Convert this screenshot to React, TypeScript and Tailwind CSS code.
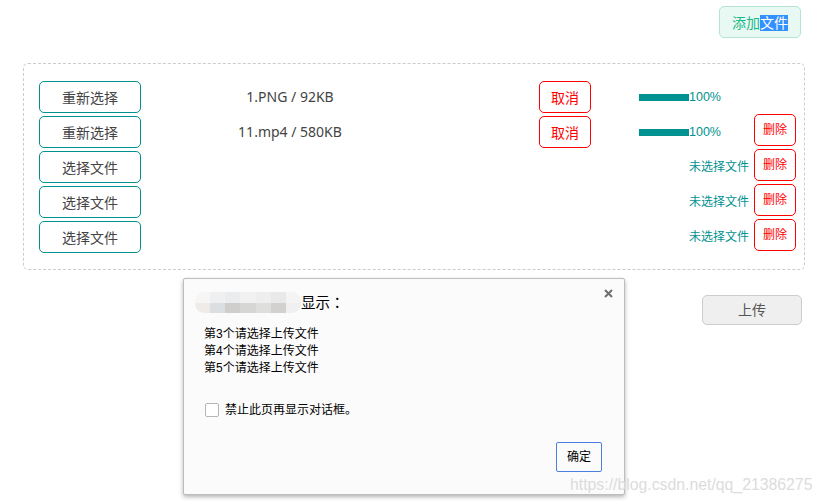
const fontCls = "font-['Liberation_Sans','Noto_Sans_CJK_SC',sans-serif]"

const rows = [
  { label: '重新选择', file: '1.PNG / 92KB', done: true, del: false },
  { label: '重新选择', file: '11.mp4 / 580KB', done: true, del: true },
  { label: '选择文件', file: '', done: false, del: true },
  { label: '选择文件', file: '', done: false, del: true },
  { label: '选择文件', file: '', done: false, del: true },
]

// pixelated blur over the hostname in the dialog title
const blurTop = ['#f7f6f5', '#eef0f1', '#ebecee', '#f1f1f1', '#eeeeee', '#e9e9e9', '#f4f4f4']
const blurBottom = ['#eeebe8', '#dcdfe2', '#cfcecc', '#d6d6d5', '#dededd', '#d2d1cf', '#f0f0f0']

function FileRow({ label, file, done, del }: (typeof rows)[number]) {
  return (
    <div className="flex h-8 items-start">
      <button className="h-8 w-[102px] shrink-0 rounded-[5px] border border-[#009191] bg-white pt-[1px] text-sm text-[#444]">
        {label}
      </button>
      <div className="w-[298px] shrink-0 pt-[6px] text-center font-['Noto_Sans','Noto_Sans_CJK_SC',sans-serif] text-sm leading-5 text-[#444]">
        {file}
      </div>
      <div className="ml-[100px] w-[52px] shrink-0">
        {done && (
          <button className="h-8 w-[52px] rounded-[5px] border border-[#ff0000] bg-white pt-[1px] text-sm text-[#ff0000]">
            取消
          </button>
        )}
      </div>
      <div className="ml-[48px] flex w-[110px] shrink-0 items-center pt-[8px] text-xs leading-4 text-[#009191]">
        {done ? (
          <>
            <div className="h-[7px] w-[50px] bg-[#009191]" />
            <span className="text-[12.5px]">100%</span>
          </>
        ) : (
          <span className="ml-[50px] whitespace-nowrap">未选择文件</span>
        )}
      </div>
      <div className="ml-[5px] w-[42px] shrink-0">
        {del && (
          <button className="-mt-[2px] block h-8 w-[42px] rounded-[5px] border border-[#ff0000] bg-white text-xs text-[#ff0000]">
            删除
          </button>
        )}
      </div>
    </div>
  )
}

export default function App() {
  return (
    <div className={`relative h-[502px] w-[823px] overflow-hidden bg-white ${fontCls}`}>
      <div className="flex justify-end pr-[22px] pt-[6px]">
        <button className="h-8 w-[82px] rounded-[5px] border border-[#b3e5d1] bg-[#e8f8f2] pt-[1px] text-sm text-[#19b98a]">
          添加<span className="bg-[#3390ff] text-white">文件</span>
        </button>
      </div>

      <div className="ml-[23px] mt-[25px] flex h-[207px] w-[782px] flex-col gap-[3px] rounded-[5px] border border-dashed border-[#cccccc] pl-[15px] pt-[17px]">
        {rows.map((r, i) => (
          <FileRow key={i} {...r} />
        ))}
      </div>

      <div className="flex justify-end pr-[21px] pt-[25px]">
        <button className="h-[30px] w-[100px] rounded-[5px] border border-[#cccccc] bg-[#efefef] text-sm text-[#555]">
          上传
        </button>
      </div>

      {/* browser alert */}
      <div className="absolute left-[183px] top-[278px] h-[217px] w-[442px] rounded-[2px] border border-[#bdbdbd] bg-[#fbfbfb] shadow-[0_2px_4px_rgba(0,0,0,0.3)]">
        <div className="absolute right-[11px] top-[10px] text-[#6e6e6e]">
          <svg width="9" height="9" viewBox="0 0 9 9">
            <path d="M1 1L8 8M8 1L1 8" stroke="currentColor" strokeWidth="2" fill="none" />
          </svg>
        </div>
        <div className="flex items-center pl-[11px] pt-[13px]">
          <div className="flex h-[21px] w-[106px] flex-col overflow-hidden rounded-[9px]">
            <div className="flex flex-1">
              {blurTop.map((c, i) => (
                <div key={i} className="flex-1" style={{ backgroundColor: c }} />
              ))}
            </div>
            <div className="flex flex-1">
              {blurBottom.map((c, i) => (
                <div key={i} className="flex-1" style={{ backgroundColor: c }} />
              ))}
            </div>
          </div>
          <span className="text-[14.5px] leading-5 text-black">
            显示<span className="font-['Noto_Sans_CJK_TC',sans-serif]">：</span>
          </span>
        </div>
        <div className="pl-[20px] pt-[13px] text-xs leading-[17px] text-black">
          <div>第3个请选择上传文件</div>
          <div>第4个请选择上传文件</div>
          <div>第5个请选择上传文件</div>
        </div>
        <div className="flex items-center pl-[21px] pt-[25px] text-xs leading-4 text-black">
          <div className="h-[14px] w-[14px] rounded-[2px] border border-[#b5b5b5] bg-white" />
          <span className="ml-[6px]">禁止此页再显示对话框。</span>
        </div>
        <button className="absolute bottom-[22px] right-[22px] h-[30px] w-[46px] rounded-[2px] border border-[#4d7fe0] bg-[#fbfbfb] text-xs text-black">
          确定
        </button>
      </div>

      <div className="absolute left-[570px] top-[475px] whitespace-nowrap text-[15.8px] leading-5 text-[#dcdcdc]">
        https://blog.csdn.net/qq_21386275
      </div>
    </div>
  )
}
